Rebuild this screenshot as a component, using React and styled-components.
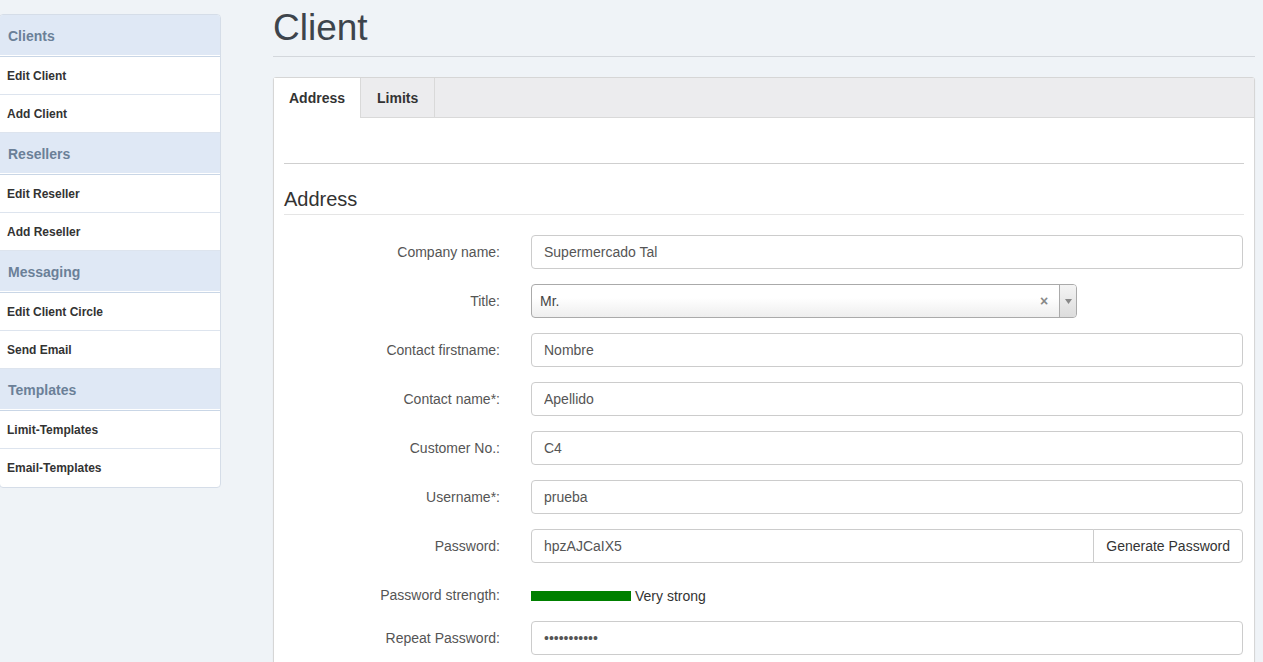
import React from "react";
import styled, { createGlobalStyle } from "styled-components";

const GlobalStyle = createGlobalStyle`
  html, body {
    margin: 0;
    padding: 0;
    background: #eff3f7;
    font-family: "Liberation Sans", Arial, sans-serif;
    color: #333;
  }
  * { box-sizing: border-box; }
`;

const Layout = styled.div`
  display: flex;
  align-items: flex-start;
  gap: 52px;
  padding-right: 8px;
`;

const Sidebar = styled.nav`
  width: 222px;
  flex: none;
  margin-left: -1px;
  margin-top: 14px;
  background: #fff;
  border: 1px solid #d5dde8;
  border-radius: 4px;
  overflow: hidden;
`;

const SideHeader = styled.div`
  height: 42px;
  display: flex;
  align-items: center;
  padding-left: 8px;
  background: #dfe8f5;
  border-bottom: 1px solid #c9d6e6;
  box-shadow: inset 0 -1px 0 #fff;
  color: #6b8098;
  font-size: 14px;
  font-weight: bold;
`;

const SideItem = styled.a`
  display: flex;
  align-items: center;
  height: 38px;
  padding-left: 7px;
  border-bottom: 1px solid ${(p) => (p.$last ? "transparent" : "#dde4ee")};
  color: #333;
  font-size: 12px;
  font-weight: bold;
  text-decoration: none;
`;

const Main = styled.main`
  flex: 1;
  min-width: 0;
`;

const PageTitle = styled.h1`
  margin: 7px 0 0;
  padding-bottom: 7px;
  font-size: 37px;
  line-height: 42px;
  font-weight: normal;
  color: #3d444c;
  border-bottom: 1px solid #d3d7dc;
`;

const Panel = styled.section`
  margin-top: 20px;
  background: #fff;
  border: 1px solid #d6d6d6;
  border-radius: 3px 3px 0 0;
  box-shadow: 0 1px 2px rgba(0, 0, 0, 0.06);
`;

const TabBar = styled.div`
  display: flex;
  height: 40px;
  background: #ececee;
  border-bottom: 1px solid #d9d9d9;
`;

const Tab = styled.div`
  display: flex;
  align-items: center;
  padding: 0 ${(p) => (p.$active ? "15px" : "16px")};
  height: ${(p) => (p.$active ? "40px" : "39px")};
  background: ${(p) => (p.$active ? "#fff" : "transparent")};
  border-right: 1px solid #d9d9d9;
  font-size: 14px;
  font-weight: bold;
  color: #333;
`;

const PanelBody = styled.div`
  padding: 45px 10px 40px;
`;

const Rule = styled.hr`
  margin: 0;
  border: 0;
  border-top: 1px solid #cfcfcf;
`;

const Legend = styled.h2`
  margin: 20px 0 20px;
  height: 31px;
  line-height: 30px;
  font-size: 20px;
  font-weight: normal;
  color: #333;
  border-bottom: 1px solid #e5e5e5;
`;

const Form = styled.div`
  display: grid;
  grid-template-columns: 216px 1fr;
  column-gap: 31px;
  row-gap: 15px;
  padding-right: 1px;
`;

const Label = styled.label`
  display: block;
  padding-top: 7px;
  line-height: 20px;
  text-align: right;
  font-size: 14px;
  color: #555;
`;

const Input = styled.input`
  width: 100%;
  height: 34px;
  padding: 6px 12px;
  font: 14px "Liberation Sans", Arial, sans-serif;
  color: #555;
  background: #fff;
  border: 1px solid #ccc;
  border-radius: ${(p) => (p.$grouped ? "4px 0 0 4px" : "4px")};
  outline: none;
`;

const InputGroup = styled.div`
  display: flex;
`;

const AddonButton = styled.button`
  flex: none;
  height: 34px;
  padding: 6px 12px;
  margin-left: -1px;
  font: 14px "Liberation Sans", Arial, sans-serif;
  color: #333;
  background: #fff;
  border: 1px solid #ccc;
  border-radius: 0 4px 4px 0;
`;

const Select = styled.div`
  display: flex;
  align-items: center;
  width: 546px;
  height: 34px;
  border: 1px solid #aaa;
  border-radius: 4px;
  background: linear-gradient(#fff 40%, #eee);
  font-size: 14px;
  color: #444;
`;

const SelectValue = styled.span`
  flex: 1;
  padding-left: 8px;
`;

const SelectClear = styled.span`
  width: 14px;
  margin-right: 8px;
  font-size: 14px;
  font-weight: bold;
  color: #888;
  text-align: center;
`;

const SelectArrow = styled.span`
  width: 17px;
  height: 100%;
  display: flex;
  align-items: center;
  justify-content: center;
  border-left: 1px solid #aaa;
  background: linear-gradient(#f4f4f4, #dcdcdc);
  border-radius: 0 3px 3px 0;
`;

const Strength = styled.div`
  display: flex;
  align-items: center;
  height: 28px;
  padding-top: 7px;
  line-height: 20px;
  align-self: start;
  gap: 4px;
  font-size: 14px;
  color: #333;
`;

const StrengthBar = styled.span`
  width: 100px;
  height: 10px;
  margin-top: 1px;
  background: #008000;
`;

const menu = [
  { title: "Clients", items: ["Edit Client", "Add Client"] },
  { title: "Resellers", items: ["Edit Reseller", "Add Reseller"] },
  { title: "Messaging", items: ["Edit Client Circle", "Send Email"] },
  { title: "Templates", items: ["Limit-Templates", "Email-Templates"] },
];

const fields = [
  ["Contact firstname:", "Nombre"],
  ["Contact name*:", "Apellido"],
  ["Customer No.:", "C4"],
  ["Username*:", "prueba"],
];

export default function App() {
  return (
    <>
      <GlobalStyle />
      <Layout>
        <Sidebar>
          {menu.map((group, gi) => (
            <div key={group.title}>
              <SideHeader>{group.title}</SideHeader>
              {group.items.map((item, ii) => (
                <SideItem
                  key={item}
                  href="#"
                  $last={gi === menu.length - 1 && ii === group.items.length - 1}
                >
                  {item}
                </SideItem>
              ))}
            </div>
          ))}
        </Sidebar>

        <Main>
          <PageTitle>Client</PageTitle>
          <Panel>
            <TabBar>
              <Tab $active>Address</Tab>
              <Tab>Limits</Tab>
            </TabBar>
            <PanelBody>
              <Rule />
              <Legend>Address</Legend>
              <Form>
                <Label>Company name:</Label>
                <Input defaultValue="Supermercado Tal" />

                <Label>Title:</Label>
                <Select>
                  <SelectValue>Mr.</SelectValue>
                  <SelectClear>×</SelectClear>
                  <SelectArrow>
                    <svg width="7" height="5" viewBox="0 0 7 5">
                      <path d="M0 0h7L3.5 5z" fill="#888" />
                    </svg>
                  </SelectArrow>
                </Select>

                {fields.map(([label, value]) => (
                  <React.Fragment key={label}>
                    <Label>{label}</Label>
                    <Input defaultValue={value} />
                  </React.Fragment>
                ))}

                <Label>Password:</Label>
                <InputGroup>
                  <Input $grouped defaultValue="hpzAJCaIX5" />
                  <AddonButton>Generate Password</AddonButton>
                </InputGroup>

                <Label>Password strength:</Label>
                <Strength>
                  <StrengthBar />
                  Very strong
                </Strength>

                <Label>Repeat Password:</Label>
                <Input type="password" defaultValue="hpzAJCaIX5x" />
              </Form>
            </PanelBody>
          </Panel>
        </Main>
      </Layout>
    </>
  );
}
